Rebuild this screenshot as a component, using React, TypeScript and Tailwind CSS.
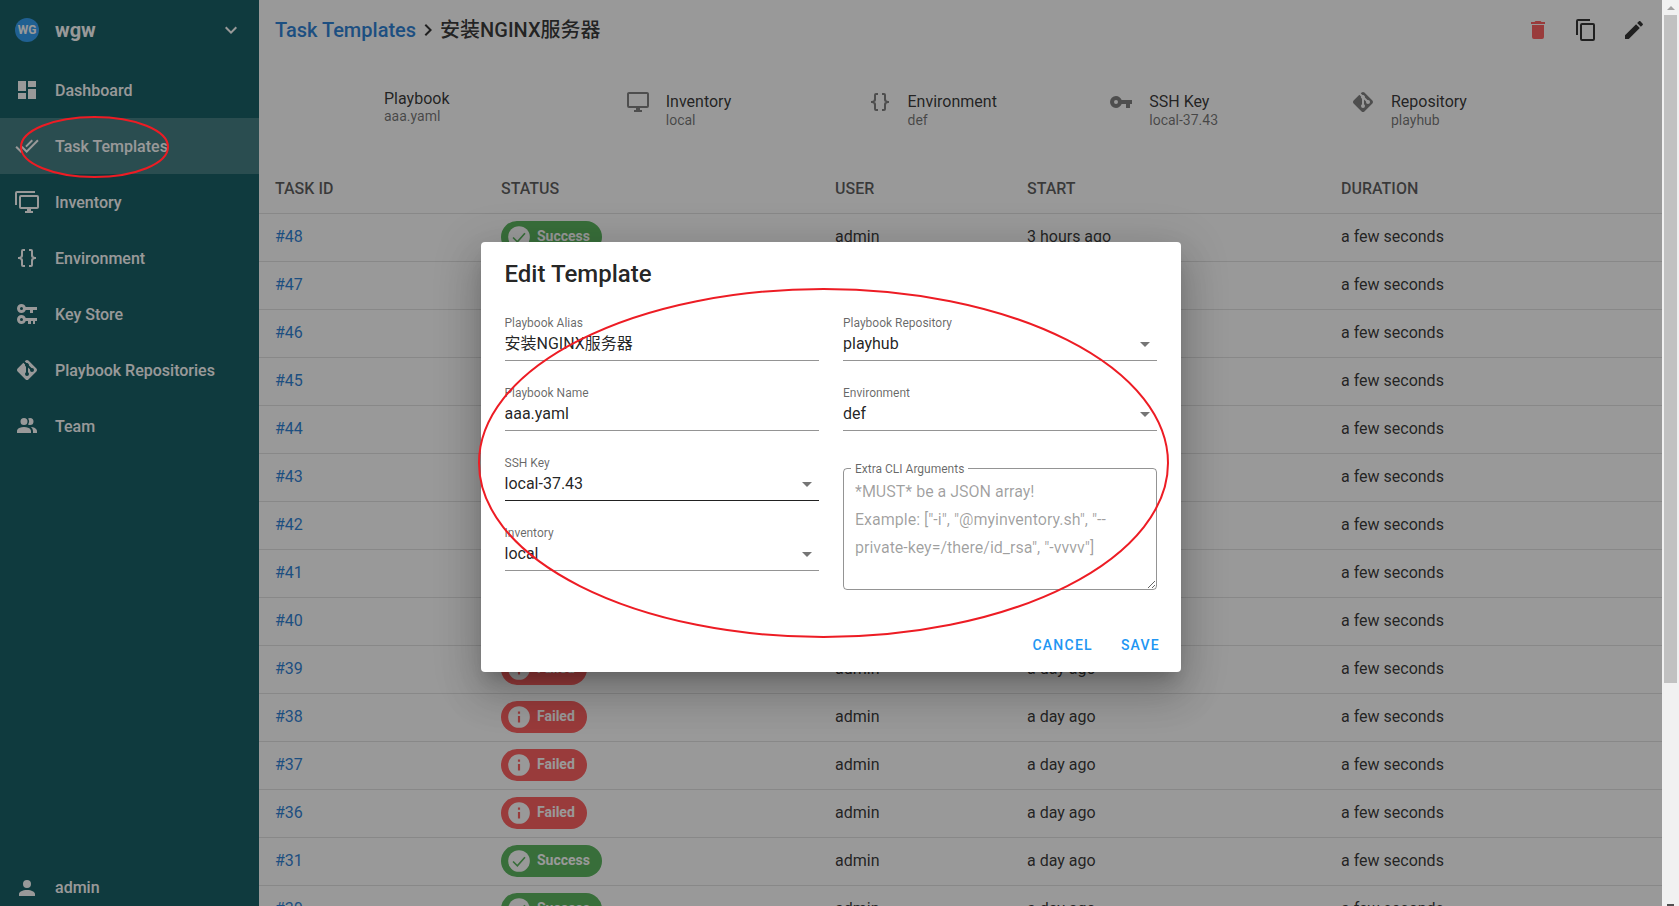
const font = { fontFamily: 'Roboto, "Noto Sans CJK SC", sans-serif' }

const paths = {
  dashboard: 'M13,3V9H21V3M13,21H21V11H13M3,21H11V15H3M3,13H11V3H3V13Z',
  checkAll: 'M0.41,13.41L6,19L7.41,17.58L1.83,12M22.24,5.58L11.66,16.17L7.5,12L6.07,13.41L11.66,19L23.66,7M18,7L16.59,5.58L10.24,11.93L11.66,13.34L18,7Z',
  monitorMultiple: 'M22,17V7H6V17H22M22,5A2,2 0 0,1 24,7V17C24,18.11 23.1,19 22,19H16V21H18V23H10V21H12V19H6C4.89,19 4,18.11 4,17V7A2,2 0 0,1 6,5H22M2,3V15H0V3A2,2 0 0,1 2,1H20V3H2Z',
  braces: 'M8,3A2,2 0 0,0 6,5V9A2,2 0 0,1 4,11H3V13H4A2,2 0 0,1 6,15V19A2,2 0 0,0 8,21H10V19H8V14A2,2 0 0,0 6,12A2,2 0 0,0 8,10V5H10V3M16,3A2,2 0 0,1 18,5V9A2,2 0 0,0 20,11H21V13H20A2,2 0 0,0 18,15V19A2,2 0 0,1 16,21H14V19H16V14A2,2 0 0,1 18,12A2,2 0 0,1 16,10V5H14V3H16Z',
  keys: 'M6.5,2C8.46,2 10.13,3.25 10.74,5H22V8H18V11H15V8H10.74C10.13,9.75 8.46,11 6.5,11C4,11 2,9 2,6.5C2,4 4,2 6.5,2M6.5,5A1.5,1.5 0 0,0 5,6.5A1.5,1.5 0 0,0 6.5,8A1.5,1.5 0 0,0 8,6.5A1.5,1.5 0 0,0 6.5,5M6.5,13C8.46,13 10.13,14.25 10.74,16H22V19H20V22H18V19H16V22H13V19H10.74C10.13,20.75 8.46,22 6.5,22C4,22 2,20 2,17.5C2,15 4,13 6.5,13M6.5,16A1.5,1.5 0 0,0 5,17.5A1.5,1.5 0 0,0 6.5,19A1.5,1.5 0 0,0 8,17.5A1.5,1.5 0 0,0 6.5,16Z',
  git: 'M2.6,10.59L8.38,4.8L10.07,6.5C9.83,7.35 10.22,8.28 11,8.73V14.27C10.4,14.61 10,15.26 10,16A2,2 0 0,0 12,18A2,2 0 0,0 14,16C14,15.26 13.6,14.61 13,14.27V9.41L15.07,11.5C15,11.65 15,11.82 15,12A2,2 0 0,0 17,14A2,2 0 0,0 19,12A2,2 0 0,0 17,10C16.82,10 16.65,10 16.5,10.07L13.93,7.5C14.19,6.57 13.71,5.55 12.78,5.16C12.35,5 11.9,4.96 11.5,5.07L9.8,3.38L10.59,2.6C11.37,1.81 12.63,1.81 13.41,2.6L21.4,10.59C22.19,11.37 22.19,12.63 21.4,13.41L13.41,21.4C12.63,22.19 11.37,22.19 10.59,21.4L2.6,13.41C1.81,12.63 1.81,11.37 2.6,10.59Z',
  team: 'M16 17V19H2V17S2 13 9 13 16 17 16 17M12.5 7.5A3.5 3.5 0 1 0 9 11A3.5 3.5 0 0 0 12.5 7.5M15.94 13A5.32 5.32 0 0 1 18 17V19H22V17S22 13.37 15.94 13M15 4A3.39 3.39 0 0 0 13.07 4.59A5 5 0 0 1 13.07 10.41A3.39 3.39 0 0 0 15 11A3.5 3.5 0 0 0 15 4Z',
  account: 'M12,4A4,4 0 0,1 16,8A4,4 0 0,1 12,12A4,4 0 0,1 8,8A4,4 0 0,1 12,4M12,14C16.42,14 20,15.79 20,18V20H4V18C4,15.79 7.58,14 12,14Z',
  chevronDown: 'M7.41,8.58L12,13.17L16.59,8.58L18,10L12,16L6,10L7.41,8.58Z',
  chevronRight: 'M8.59,16.58L13.17,12L8.59,7.41L10,6L16,12L10,18L8.59,16.58Z',
  trash: 'M19,4H15.5L14.5,3H9.5L8.5,4H5V6H19M6,19A2,2 0 0,0 8,21H16A2,2 0 0,0 18,19V7H6V19Z',
  copy: 'M19,21H8V7H19M19,5H8A2,2 0 0,0 6,7V21A2,2 0 0,0 8,23H19A2,2 0 0,0 21,21V7A2,2 0 0,0 19,5M16,1H4A2,2 0 0,0 2,3V17H4V3H16V1Z',
  pencil: 'M20.71,7.04C21.1,6.65 21.1,6 20.71,5.63L18.37,3.29C18,2.9 17.35,2.9 16.96,3.29L15.12,5.12L18.87,8.87M3,17.25V21H6.75L17.81,9.93L14.06,6.18L3,17.25Z',
  monitor: 'M21,16H3V4H21M21,2H3C1.89,2 1,2.89 1,4V16A2,2 0 0,0 3,18H10V20H8V22H16V20H14V18H21A2,2 0 0,0 23,16V4C23,2.89 22.1,2 21,2Z',
  key: 'M7,14A2,2 0 0,1 5,12A2,2 0 0,1 7,10A2,2 0 0,1 9,12A2,2 0 0,1 7,14M12.65,10C11.83,7.67 9.61,6 7,6A6,6 0 0,0 1,12A6,6 0 0,0 7,18C9.61,18 11.83,16.33 12.65,14H17V18H21V14H23V10H12.65Z',
  info: 'M13,9H11V7H13M13,17H11V11H13M12,2A10,10 0 0,0 2,12A10,10 0 0,0 12,22A10,10 0 0,0 22,12A10,10 0 0,0 12,2Z',
}

function Icon({ d, className }: { d: string; className?: string }) {
  return (
    <svg viewBox="0 0 24 24" fill="currentColor" className={`h-6 w-6 shrink-0 ${className ?? ''}`}>
      <path d={d} />
    </svg>
  )
}

const nav = [
  { label: 'Dashboard', icon: paths.dashboard },
  { label: 'Task Templates', icon: paths.checkAll, active: true },
  { label: 'Inventory', icon: paths.monitorMultiple },
  { label: 'Environment', icon: paths.braces },
  { label: 'Key Store', icon: paths.keys },
  { label: 'Playbook Repositories', icon: paths.git },
  { label: 'Team', icon: paths.team },
]

const facts = [
  { title: 'Playbook', value: 'aaa.yaml' },
  { title: 'Inventory', value: 'local', icon: paths.monitor },
  { title: 'Environment', value: 'def', icon: paths.braces },
  { title: 'SSH Key', value: 'local-37.43', icon: paths.key },
  { title: 'Repository', value: 'playhub', icon: paths.git },
]

type Row = { id: number; ok: boolean; start: string }

const rows: Row[] = [
  { id: 48, ok: true, start: '3 hours ago' },
  { id: 47, ok: true, start: '3 hours ago' },
  { id: 46, ok: true, start: '3 hours ago' },
  { id: 45, ok: true, start: 'a day ago' },
  { id: 44, ok: true, start: 'a day ago' },
  { id: 43, ok: true, start: 'a day ago' },
  { id: 42, ok: false, start: 'a day ago' },
  { id: 41, ok: false, start: 'a day ago' },
  { id: 40, ok: false, start: 'a day ago' },
  { id: 39, ok: false, start: 'a day ago' },
  { id: 38, ok: false, start: 'a day ago' },
  { id: 37, ok: false, start: 'a day ago' },
  { id: 36, ok: false, start: 'a day ago' },
  { id: 31, ok: true, start: 'a day ago' },
  { id: 30, ok: true, start: 'a day ago' },
]

export default function App() {
  return (
    <div className="flex h-screen overflow-hidden bg-white" style={font}>
      <div className="relative flex min-w-0 flex-1">
        <Sidebar />
        <main className="min-w-0 flex-1">
          <Toolbar />
          <Facts />
          <TaskTable />
        </main>

        <div className="absolute inset-0 flex justify-center bg-[rgba(33,33,33,0.46)] pt-[242px]">
          <EditDialog />
        </div>

        <svg className="pointer-events-none absolute inset-0 h-full w-full" fill="none" stroke="#ed1c24" strokeWidth="2">
          <ellipse cx="94.5" cy="147" rx="73.5" ry="30" />
          <ellipse cx="823.5" cy="463" rx="344.5" ry="174" />
        </svg>
      </div>
      <Scrollbar />
    </div>
  )
}

function Sidebar() {
  return (
    <aside className="flex w-[259px] shrink-0 flex-col bg-[#005057] text-white">
      <div className="flex h-[62px] items-center pb-[2px] pl-[15px] pr-4">
        <span className="flex h-6 w-6 items-center justify-center rounded-full bg-[#2196f3] text-[12px] font-bold">WG</span>
        <span className="ml-4 flex-1 text-[20px] font-bold">wgw</span>
        <Icon d={paths.chevronDown} />
      </div>
      <nav>
        {nav.map((n) => (
          <div key={n.label} className={`flex h-14 items-center gap-4 pl-[15px] text-[16px] font-medium ${n.active ? 'bg-white/20' : ''}`}>
            <Icon d={n.icon} />
            <span className="pt-[2px]">{n.label}</span>
          </div>
        ))}
      </nav>
      <div className="mt-auto flex h-[30px] items-start gap-4 pl-[15px] text-[16px] font-medium">
        <Icon d={paths.account} />
        <span>admin</span>
      </div>
    </aside>
  )
}

function Toolbar() {
  return (
    <div className="flex h-[60px] items-center pl-4 pr-4 text-[20px] font-medium text-black/87">
      <span className="text-[#1976d2]">Task Templates</span>
      <Icon d={paths.chevronRight} className="text-black/87" />
      <span>安装NGINX服务器</span>
      <div className="ml-auto flex items-center gap-[24px]">
        <Icon d={paths.trash} className="text-[#ff5252]" />
        <Icon d={paths.copy} />
        <Icon d={paths.pencil} />
      </div>
    </div>
  )
}

function Facts() {
  return (
    <div className="flex h-[96px] items-start pl-[125px] pt-[26px]">
      {facts.map((f) => (
        <div key={f.title} className={`flex w-[241.75px] shrink-0 gap-4 ${f.icon ? 'pt-[4px]' : 'pt-[1px]'}`}>
          {f.icon && <Icon d={f.icon} className="text-black/54" />}
          <div>
            <div className="text-[16px] leading-[24px] text-black/87">{f.title}</div>
            <div className={`text-[14px] text-black/60 ${f.icon ? 'leading-[12px]' : 'leading-[10px]'}`}>{f.value}</div>
          </div>
        </div>
      ))}
    </div>
  )
}

function TaskTable() {
  return (
    <div className="text-[16px]">
      <div className="flex h-[58px] items-center border-b border-black/12 pt-[9px] font-medium text-black/70">
        <Cols a="TASK ID" b="STATUS" c="USER" d="START" e="DURATION" />
      </div>
      {rows.map((r) => (
        <div key={r.id} className="flex h-12 items-center border-b border-black/12 pb-[2px] text-black/87">
          <Cols
            a={<span className="text-[#1976d2]">#{r.id}</span>}
            b={<Status ok={r.ok} />}
            c="admin"
            d={r.start}
            e="a few seconds"
          />
        </div>
      ))}
    </div>
  )
}

function Cols({ a, b, c, d, e }: { a: React.ReactNode; b: React.ReactNode; c: React.ReactNode; d: React.ReactNode; e: React.ReactNode }) {
  return (
    <>
      <div className="w-[242px] pl-4">{a}</div>
      <div className="flex w-[334px]">{b}</div>
      <div className="w-[192px]">{c}</div>
      <div className="w-[314px]">{d}</div>
      <div>{e}</div>
    </>
  )
}

function Status({ ok }: { ok: boolean }) {
  return (
    <span className={`inline-flex h-8 items-center rounded-full pl-[5px] pr-3 text-[14px] font-bold text-white ${ok ? 'bg-[#4caf50]' : 'bg-[#ff5252]'}`}>
      {ok ? (
        <svg viewBox="0 0 24 24" className="mr-[5px] h-[26px] w-[26px]">
          <circle cx="12" cy="12" r="10" fill="#fff" />
          <path d="M6.5 12.5l4 4 7-8" fill="none" stroke="#4caf50" strokeWidth="1.5" />
        </svg>
      ) : (
        <svg viewBox="0 0 24 24" fill="#fff" className="mr-[5px] h-[26px] w-[26px]">
          <path d={paths.info} />
        </svg>
      )}
      {ok ? 'Success' : 'Failed'}
    </span>
  )
}

function Field({ label, value, select, active }: { label: string; value: string; select?: boolean; active?: boolean }) {
  return (
    <div className="h-[70px] pt-[15px]">
      <div className={`border-b ${active ? 'border-black/87' : 'border-black/42'}`}>
        <div className="text-[12px] leading-[12px] text-black/60">{label}</div>
        <div className="flex h-[31px] items-center pb-[2px] text-[16px] text-black/87">
          <span className="flex-1">{value}</span>
          {select && <span className="mr-[7px] mt-[2px] h-0 w-0 border-x-[5px] border-t-[5px] border-x-transparent border-t-black/54" />}
        </div>
      </div>
    </div>
  )
}

function EditDialog() {
  return (
    <div className="h-[430px] w-[700px] rounded bg-white shadow-[0_11px_15px_-7px_rgba(0,0,0,0.2),0_24px_38px_3px_rgba(0,0,0,0.14),0_9px_46px_8px_rgba(0,0,0,0.12)]">
      <div className="flex h-[60px] items-center pl-[23.5px] pt-[3px] text-[24px] font-medium text-black/87">Edit Template</div>
      <div className="grid grid-cols-2 gap-x-6 px-6">
        <div className="-ml-[0.5px]">
          <Field label="Playbook Alias" value="安装NGINX服务器" />
          <Field label="Playbook Name" value="aaa.yaml" />
          <Field label="SSH Key" value="local-37.43" select active />
          <Field label="Inventory" value="local" select />
        </div>
        <div>
          <Field label="Playbook Repository" value="playhub" select />
          <Field label="Environment" value="def" select />
          <div className="relative mt-[26px] flex h-[122px] rounded border border-black/42">
            <span className="absolute -top-[7px] left-[7px] bg-white px-1 text-[12px] leading-[14px] text-black/60">Extra CLI Arguments</span>
            <textarea
              className="h-full w-full rounded pl-[11px] pr-3 pt-[9px] text-[16px] leading-[28px] text-black/87 outline-none placeholder:text-black/38"
              placeholder={'*MUST* be a JSON array!\nExample: ["-i", "@myinventory.sh", "--private-key=/there/id_rsa", "-vvvv"]'}
            />
          </div>
        </div>
      </div>
      <div className="flex justify-end gap-[28px] pr-[21px] pt-[45px] text-[14px] font-medium uppercase tracking-[0.089em] text-[#2196f3]">
        <span>Cancel</span>
        <span>Save</span>
      </div>
    </div>
  )
}

function Scrollbar() {
  return (
    <div className="flex w-[17px] shrink-0 flex-col items-center bg-[#f1f1f1]">
      <div className="flex h-[15px] items-center justify-center">
        <span className="h-0 w-0 border-x-[4px] border-b-[4px] border-x-transparent border-b-[#a3a3a3]" />
      </div>
      <div className="h-[668px] w-[13px] bg-[#c1c1c1]" />
      <div className="mt-auto h-[2px] w-[7px] bg-[#505050]" />
    </div>
  )
}
